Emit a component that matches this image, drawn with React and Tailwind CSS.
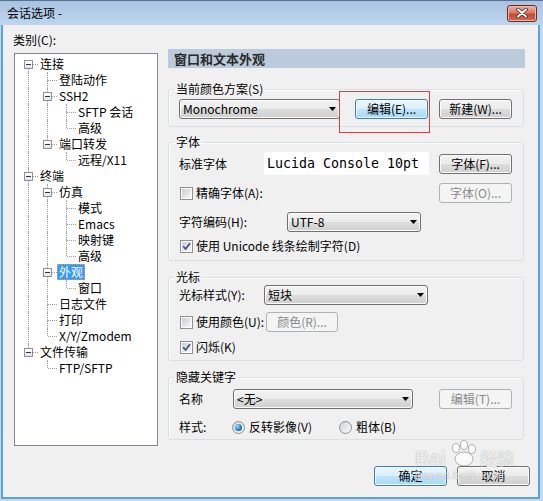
import React from 'react';

const tree = [
  {
    label: '连接',
    children: [
      { label: '登陆动作' },
      { label: 'SSH2', children: [{ label: 'SFTP 会话' }, { label: '高级' }] },
      { label: '端口转发', children: [{ label: '远程/X11' }] },
    ],
  },
  {
    label: '终端',
    children: [
      { label: '仿真', children: [{ label: '模式' }, { label: 'Emacs' }, { label: '映射键' }, { label: '高级' }] },
      { label: '外观', selected: true, children: [{ label: '窗口' }] },
      { label: '日志文件' },
      { label: '打印' },
      { label: 'X/Y/Zmodem' },
    ],
  },
  { label: '文件传输', children: [{ label: 'FTP/SFTP' }] },
];

function flatten(nodes, guides = [], out = []) {
  nodes.forEach((n, i) => {
    const last = i === nodes.length - 1;
    out.push({ ...n, guides, last, first: guides.length === 0 && i === 0 });
    if (n.children) flatten(n.children, [...guides, !last], out);
  });
  return out;
}

const line = 'border-dotted border-[#a0a0a0]';

function TreeRow({ row }) {
  return (
    <div className="flex h-[16px]">
      {row.guides.map((g, j) => (
        <div key={j} className="h-full w-[19px] shrink-0">
          {g && <div className={`h-full w-[10px] border-r ${line}`} />}
        </div>
      ))}
      <div className="relative flex h-full w-[19px] shrink-0 flex-col">
        <div className={`h-[8px] w-[10px] ${row.first ? '' : `border-r ${line}`}`} />
        <div className="flex h-[8px]">
          <div className={`h-full w-[10px] ${row.last ? '' : `border-r ${line}`}`} />
          <div className={`h-0 w-[9px] border-t ${line}`} />
        </div>
        {row.children && (
          <div className="absolute left-[5px] top-[4px] flex h-[9px] w-[9px] items-center justify-center border border-[#919191] bg-[linear-gradient(#ffffff,#e4e4e4)]">
            <div className="h-[1px] w-[5px] bg-[#1e3a5a]" />
          </div>
        )}
      </div>
      <span
        className={`flex h-[16px] items-center px-[2px] leading-[16px] whitespace-nowrap ${
          row.selected ? 'bg-[#3399ff] text-white outline outline-1 outline-dotted outline-[#e8a040] -outline-offset-1' : 'text-black'
        }`}
      >
        {row.label}
      </span>
    </div>
  );
}

const btnStyles = {
  normal:
    'border-[#707070] bg-[linear-gradient(#f2f2f2,#ebebeb_50%,#dddddd_50%,#cfcfcf)] text-black shadow-[inset_0_0_0_1px_#fcfcfc]',
  focus:
    'border-[#3c7fb1] bg-[linear-gradient(#eaf6fd,#d9f0fc_50%,#bee6fd_50%,#a7d9f5)] text-black shadow-[inset_0_0_0_1px_#f4fbff]',
  disabled: 'border-[#adb2b5] bg-[#f4f4f4] text-[#8a8a8a]',
};

function Btn({ children, variant = 'normal', className = '' }) {
  return (
    <div
      className={`flex h-[20px] shrink-0 items-center justify-center rounded-[3px] border leading-[16px] ${btnStyles[variant]} ${className}`}
    >
      {children}
    </div>
  );
}

function Combo({ value, className = '' }) {
  return (
    <div
      className={`flex h-[20px] shrink-0 items-center justify-between rounded-[3px] border border-[#707070] bg-[linear-gradient(#f2f2f2,#ebebeb_50%,#dddddd_50%,#cfcfcf)] pl-[3px] pr-[2px] shadow-[inset_0_0_0_1px_#fcfcfc] ${className}`}
    >
      <span className="leading-[16px]">{value}</span>
      <svg width="7" height="4" viewBox="0 0 7 4" className="mr-[1px]">
        <path d="M0 0h7L3.5 4z" fill="#000" />
      </svg>
    </div>
  );
}

function Check({ checked }) {
  return (
    <div className="flex h-[13px] w-[13px] shrink-0 items-center justify-center border border-[#8f8f8f] bg-white">
      <div className="flex h-[9px] w-[9px] items-center justify-center bg-[linear-gradient(135deg,#c9cdd3,#f7f7f7)]">
        {checked && (
          <svg width="9" height="9" viewBox="0 0 9 9">
            <path d="M1.2 4.3L3.6 7L8 1.2" stroke="#3d4f80" strokeWidth="1.7" fill="none" />
          </svg>
        )}
      </div>
    </div>
  );
}

function Radio({ checked }) {
  return (
    <div className="flex h-[13px] w-[13px] shrink-0 items-center justify-center rounded-full border border-[#8f8f8f] bg-[linear-gradient(135deg,#cfd3d8,#fbfbfb)]">
      {checked && (
        <div className="h-[7px] w-[7px] rounded-full bg-[radial-gradient(circle_at_35%_35%,#a8dcfb,#1f74c2_60%,#0b4a8a)]" />
      )}
    </div>
  );
}

function Group({ title, className = '', children }) {
  return (
    <fieldset
      className={`w-[356px] rounded-[3px] border border-[#d5dfe5] px-[5px] shadow-[inset_1px_1px_0_#fff] ${className}`}
    >
      <legend className="px-[2px] leading-[16px]">{title}</legend>
      <div className="pl-[5px]">{children}</div>
    </fieldset>
  );
}

export default function App() {
  const rows = flatten(tree);
  return (
    <div className="relative flex h-[501px] w-[543px] flex-col overflow-hidden bg-[#c4d9ee] pb-[2px] pl-[1px] pr-[3px] font-['Noto_Sans_CJK_SC','Liberation_Sans',sans-serif] text-[12px] text-black">
      {/* title bar */}
      <div className="-ml-[1px] -mr-[3px] flex h-[25px] shrink-0 items-center justify-between border-t border-[#5a7190] bg-[linear-gradient(#a8c3e1,#bed5ee)] pl-[7px] pr-[6px]">
        <span className="leading-[16px]">会话选项 -</span>
        <div className="flex h-[17px] w-[30px] items-center justify-center rounded-[3px] border border-[#6e2a20] bg-[linear-gradient(#eab1a6,#d97a68_45%,#c44a32_55%,#d06a50)] shadow-[inset_0_0_0_1px_#f0b8a8]">
          <svg width="12" height="10" viewBox="0 0 12 10">
            <path d="M2 1.5L10 8.5M10 1.5L2 8.5" stroke="#4a2a26" strokeWidth="3.6" strokeLinecap="round" />
            <path d="M2 1.5L10 8.5M10 1.5L2 8.5" stroke="#ffffff" strokeWidth="2" strokeLinecap="round" />
          </svg>
        </div>
      </div>

      {/* body */}
      <div className="flex flex-1 flex-col border-x-2 border-b-2 border-[#5aa2dc] bg-[#f0f0f0] pl-[11px] pt-[7px]">
        <div className="flex items-start">
          {/* left: category tree */}
          <div className="flex w-[144px] flex-col">
            <span className="-ml-[1px] leading-[16px]">类别(C):</span>
            <div className="mt-[5px] h-[393px] border border-[#828790] bg-white pl-[4px] pt-[2px]">
              {rows.map((r, i) => (
                <TreeRow key={i} row={r} />
              ))}
            </div>
          </div>

          {/* right: appearance settings */}
          <div className="ml-[10px] mt-[17px] flex w-[357px] flex-col">
            <div className="flex h-[19px] items-center bg-[#bccbdb] pl-[6px] text-[13px] font-bold text-[#2a2a2a]">
              窗口和文本外观
            </div>

            <Group title="当前颜色方案(S)" className="mt-[13px] pb-[7px]">
              <div className="flex items-center pt-[2px]">
                <Combo value="Monochrome" className="w-[161px]" />
                <div className="relative ml-[15px]">
                  <Btn variant="focus" className="w-[73px]">编辑(E)...</Btn>
                  <div className="pointer-events-none absolute -left-[16px] -top-[8px] h-[42px] w-[91px] border border-[#e53a3a]" />
                </div>
                <Btn className="ml-[11px] w-[73px]">新建(W)...</Btn>
              </div>
            </Group>

            <Group title="字体" className="mt-[7px] pb-[6px]">
              <div className="flex flex-col pt-[2px]">
                <div className="flex h-[23px] items-center">
                  <span className="w-[85px]">标准字体</span>
                  <div className="flex h-[23px] w-[165px] items-center bg-white pl-[3px] font-['DejaVu_Sans_Mono','Liberation_Mono',monospace] text-[13.3px] whitespace-nowrap">
                    Lucida Console 10pt
                  </div>
                  <Btn className="ml-[10px] w-[73px]">字体(F)...</Btn>
                </div>
                <div className="mt-[8px] flex h-[20px] items-center">
                  <div className="flex w-[260px] items-center pl-[1px]">
                    <Check />
                    <span className="ml-[3px]">精确字体(A):</span>
                  </div>
                  <Btn variant="disabled" className="w-[73px]">字体(O)...</Btn>
                </div>
                <div className="mt-[9px] flex h-[20px] items-center">
                  <span className="w-[108px]">字符编码(H):</span>
                  <Combo value="UTF-8" className="w-[134px]" />
                </div>
                <div className="mt-[6px] flex h-[16px] items-center pl-[1px]">
                  <Check checked />
                  <span className="ml-[3px]">使用 Unicode 线条绘制字符(D)</span>
                </div>
              </div>
            </Group>

            <Group title="光标" className="mt-[8px] pb-[5px]">
              <div className="flex flex-col">
                <div className="flex h-[20px] items-center">
                  <span className="w-[85px]">光标样式(Y):</span>
                  <Combo value="短块" className="w-[164px]" />
                </div>
                <div className="mt-[7px] flex h-[20px] items-center">
                  <div className="flex w-[87px] items-center pl-[1px]">
                    <Check />
                    <span className="ml-[3px]">使用颜色(U):</span>
                  </div>
                  <Btn variant="disabled" className="w-[72px]">颜色(R)...</Btn>
                </div>
                <div className="mt-[7px] flex h-[16px] items-center pl-[1px]">
                  <Check checked />
                  <span className="ml-[3px]">闪烁(K)</span>
                </div>
              </div>
            </Group>

            <Group title="隐藏关键字" className="mt-[8px] pb-[4px]">
              <div className="flex flex-col pt-[4px]">
                <div className="flex h-[20px] items-center">
                  <span className="w-[54px]">名称</span>
                  <Combo value="<无>" className="w-[180px]" />
                  <Btn variant="disabled" className="ml-[26px] w-[73px]">编辑(T)...</Btn>
                </div>
                <div className="mt-[10px] flex h-[16px] items-center">
                  <span className="w-[53px]">样式:</span>
                  <div className="flex w-[107px] items-center">
                    <Radio checked />
                    <span className="ml-[4px]">反转影像(V)</span>
                  </div>
                  <Radio />
                  <span className="ml-[4px]">粗体(B)</span>
                </div>
              </div>
            </Group>
          </div>
        </div>

        {/* dialog buttons */}
        <div className="mt-[20px] flex justify-end pr-[8px]">
          <Btn variant="focus" className="w-[73px]">确定</Btn>
          <Btn className="ml-[10px] w-[73px]">取消</Btn>
        </div>
      </div>

      {/* watermark */}
      <div className="pointer-events-none absolute left-[415px] top-[440px] flex flex-col items-start text-white/80 [text-shadow:0_0_1px_rgba(80,80,80,0.6)]">
        <div className="flex items-end">
          <span className="font-['Liberation_Sans',sans-serif] text-[20px] font-bold leading-[20px]">Bai</span>
          <svg width="32" height="28" viewBox="0 0 32 28" className="mx-[1px]">
            <g fill="rgba(255,255,255,0.75)" stroke="rgba(110,110,110,0.5)" strokeWidth="1">
              <ellipse cx="9" cy="8" rx="3.5" ry="4.5" />
              <ellipse cx="17" cy="5" rx="3.5" ry="4.5" />
              <ellipse cx="25" cy="9" rx="3.5" ry="4.5" />
              <ellipse cx="17" cy="19" rx="9" ry="7" />
            </g>
          </svg>
          <span className="text-[17px] font-bold leading-[20px]">经验</span>
        </div>
        <span className="mt-[1px] font-['Liberation_Sans',sans-serif] text-[11px] leading-[12px]">jingyan.baidu.com</span>
      </div>
    </div>
  );
}
